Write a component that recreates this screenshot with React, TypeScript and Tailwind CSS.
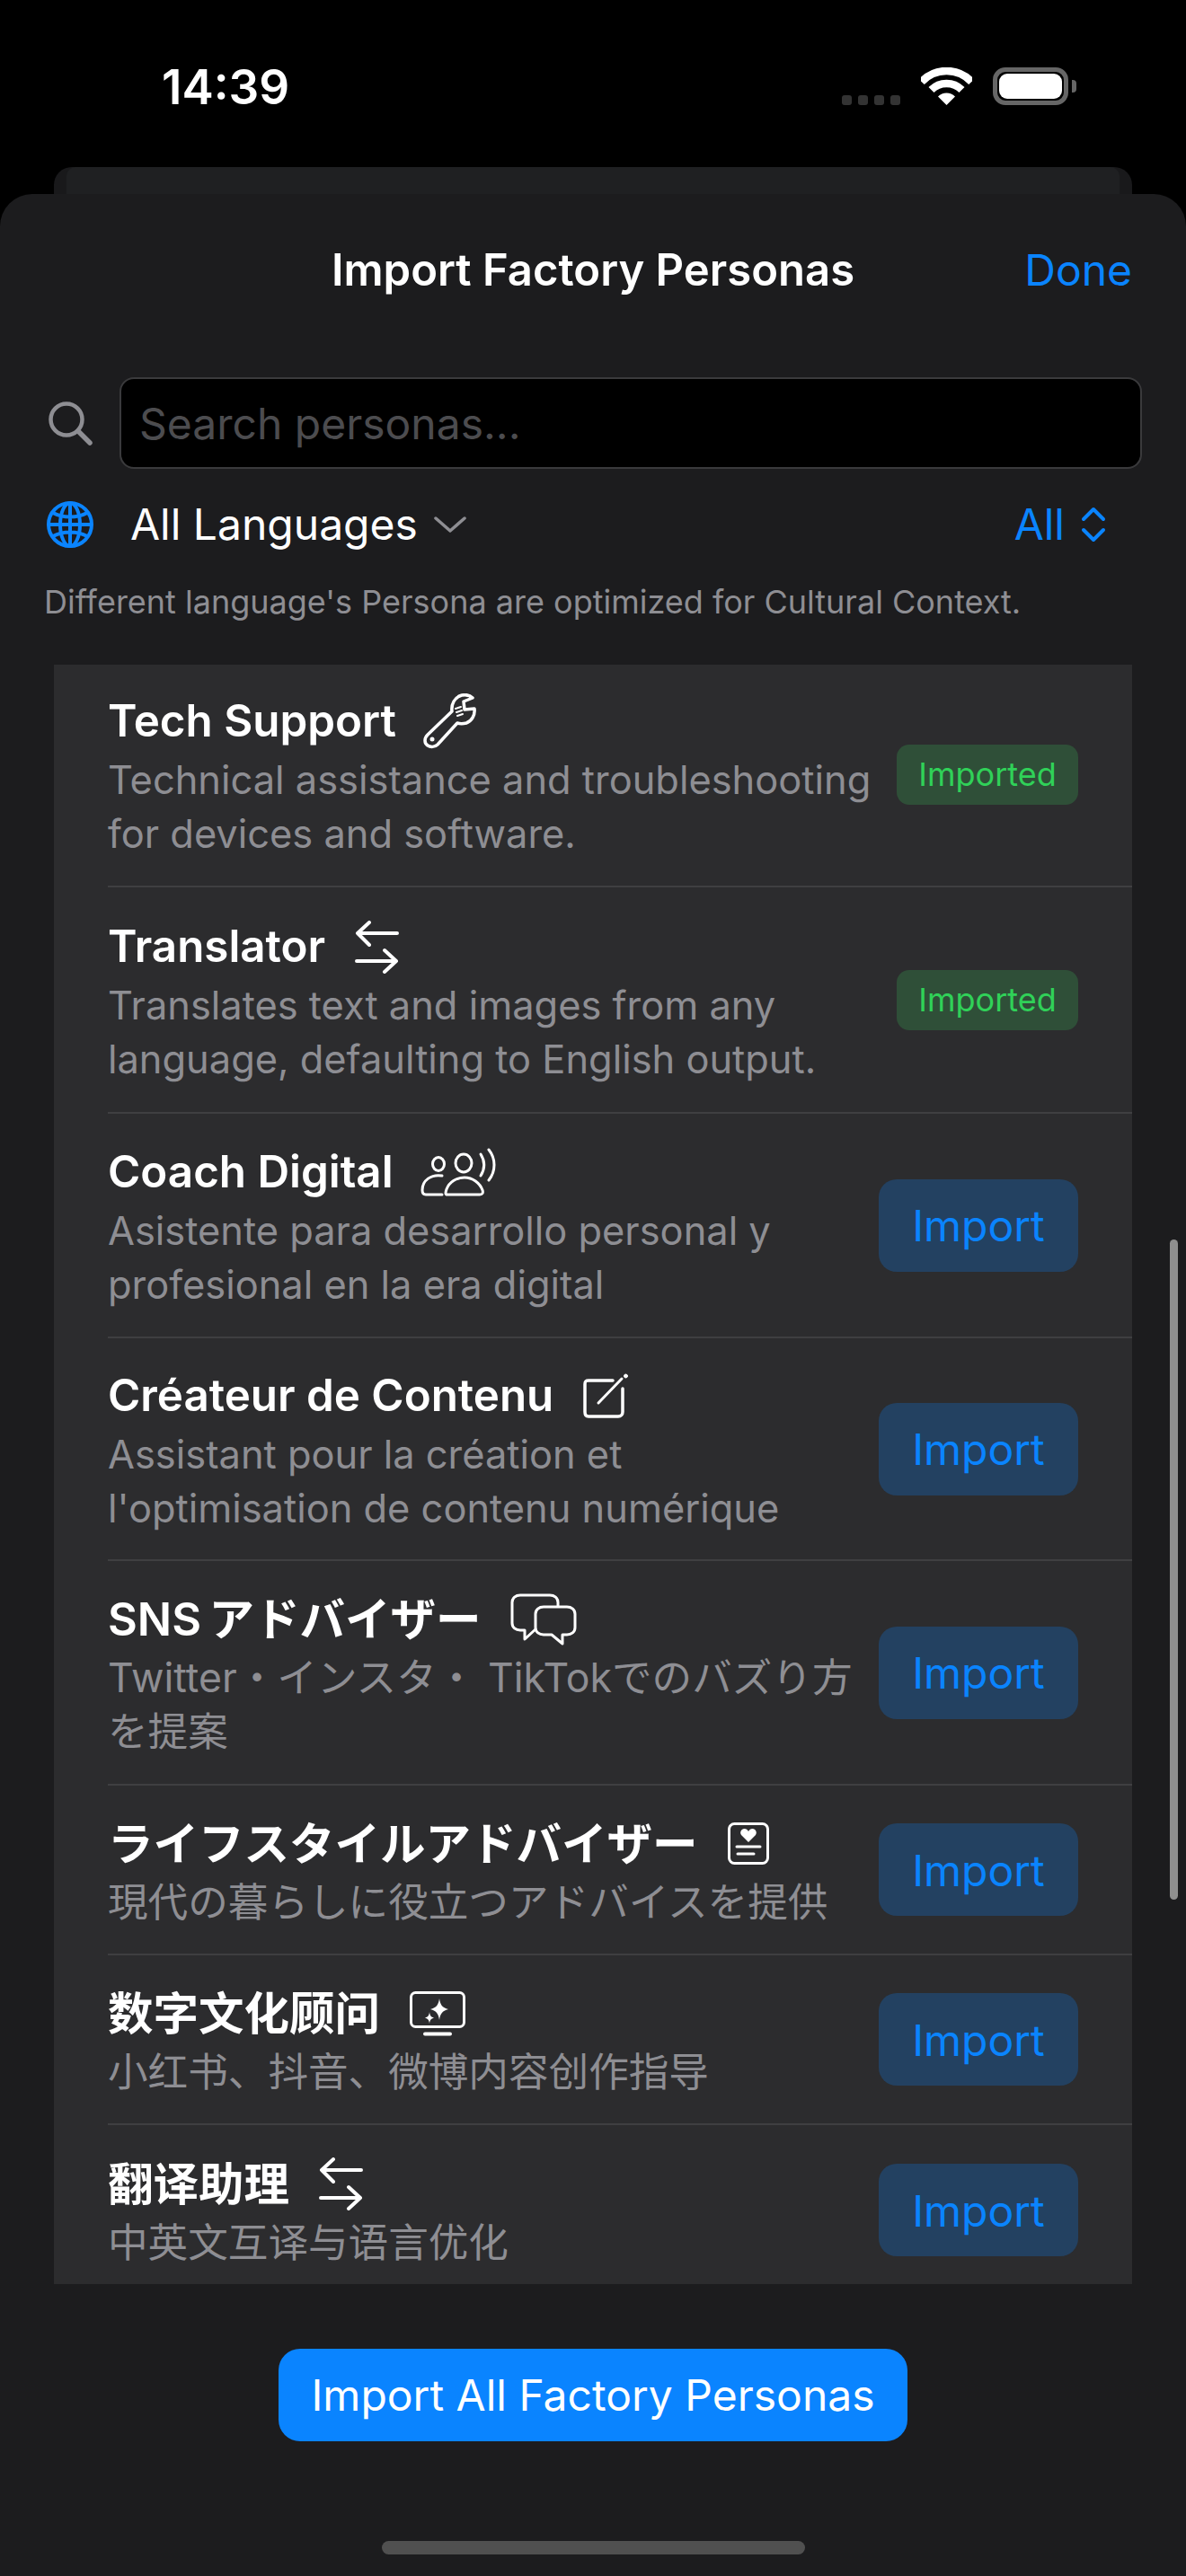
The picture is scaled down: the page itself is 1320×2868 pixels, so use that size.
import { JSX, ReactNode } from 'react';

const cjkJp = "font-['Inter','Noto_Sans_CJK_JP',sans-serif]";
const cjkSc = "font-['Inter','Noto_Sans_CJK_SC',sans-serif]";

function WrenchIcon(): JSX.Element {
  return (
    <svg viewBox="0 0 60 62" className="w-[60px] h-[62px] -ml-[3px]" fill="none" stroke="#fff" strokeWidth="3.5" strokeLinejoin="round" strokeLinecap="round">
      <path d="M5 46 L32 20 C31 12 35 4 43 2 C48 1 52 2 55 5 L45 9 L46 18 L57 17 C58 24 54 31 48 33 C44 34 41 34 38 33 L16 57 C13 60 8 60 5 58 C1 55 1 50 5 46 Z" />
      <circle cx="10" cy="51" r="2.5" fill="#fff" stroke="none" />
      <path d="M36 17 L42 15 M37 21 L43 19 M38 25 L44 23" strokeWidth="2" />
    </svg>
  );
}

function SwapIcon(): JSX.Element {
  return (
    <svg viewBox="0 0 49 59" className="w-[49px] h-[59px]" fill="none" stroke="#fff" strokeWidth="4" strokeLinecap="round" strokeLinejoin="round">
      <path d="M47 14 H3 M16 2 L3 14 L16 27" />
      <path d="M2 45 H46 M33 33 L46 45 L33 57" />
    </svg>
  );
}

function CoachIcon(): JSX.Element {
  return (
    <svg viewBox="0 0 85 54" className="w-[85px] h-[54px] -ml-[3px]" fill="none" stroke="#fff" strokeWidth="3" strokeLinecap="round" strokeLinejoin="round">
      <ellipse cx="20" cy="18" rx="6.5" ry="7.5" />
      <ellipse cx="48" cy="17" rx="9" ry="10" />
      <path d="M24 31 C12 29 2 36 2 47 C2 50 3 52 6 52 H24" />
      <path d="M30 52 C27 52 28 49 29 46 C32 38 40 33 49 33 C58 33 66 39 69 47 C70 50 69 52 66 52 Z" />
      <path d="M67 7 C72 15 72 23 67 31" />
      <path d="M76 2 C84 12 84 26 76 36" />
    </svg>
  );
}

function EditIcon(): JSX.Element {
  return (
    <svg viewBox="0 0 51 50" className="w-[51px] h-[50px]" fill="none" stroke="#fff" strokeLinecap="round" strokeLinejoin="round">
      <path d="M33 8 H6 C3 8 2 9 2 12 V43 C2 46 3 48 6 48 H39 C42 48 44 46 44 43 V17" strokeWidth="3.5" />
      <path d="M17 33 L43 6" strokeWidth="3" />
      <circle cx="47.5" cy="3" r="2" fill="#fff" />
    </svg>
  );
}

function ChatIcon(): JSX.Element {
  return (
    <svg viewBox="0 0 74 58" className="w-[74px] h-[58px]" fill="none" stroke="#fff" strokeWidth="3" strokeLinejoin="round">
      <path d="M53 14 V10 C53 5 49 2 44 2 H11 C6 2 2 5 2 10 V33 C2 38 6 41 11 41 H16 V51 L28 40" />
      <path d="M37 15 H63 C68 15 72 18 72 23 V38 C72 43 68 46 63 46 H58 V56 L46 46 H37 C32 46 28 43 28 38 V23 C28 18 32 15 37 15 Z" />
    </svg>
  );
}

function HeartCardIcon(): JSX.Element {
  return (
    <svg viewBox="0 0 46 47" className="w-[46px] h-[47px]" fill="none" stroke="#fff" strokeLinecap="round">
      <rect x="1.5" y="1.5" width="43" height="44" rx="6" strokeWidth="3" />
      <path d="M23 22 L15 14 C13 11 15 7 18.5 7 C20.5 7 22 8 23 10 C24 8 25.5 7 27.5 7 C31 7 33 11 31 14 Z" fill="#fff" stroke="none" />
      <path d="M10 27 H36" strokeWidth="3" />
      <path d="M11 35 H29" strokeWidth="3" />
    </svg>
  );
}

function SparkDisplayIcon(): JSX.Element {
  return (
    <svg viewBox="0 0 62 50" className="w-[62px] h-[50px]" fill="none" stroke="#fff" strokeLinecap="round">
      <rect x="1.5" y="1.5" width="59" height="38" rx="5" strokeWidth="3" />
      <path d="M17 47.5 H45" strokeWidth="4" />
      <path d="M33 8 C34 15 36 18 43 20 C36 22 34 25 33 32 C32 25 30 22 23 20 C30 18 32 15 33 8 Z" fill="#fff" stroke="none" />
      <path d="M22 23 C22.5 27 23.5 28.5 27 29.5 C23.5 30.5 22.5 32 22 36 C21.5 32 20.5 30.5 17 29.5 C20.5 28.5 21.5 27 22 23 Z" fill="#fff" stroke="none" />
    </svg>
  );
}

type Row = {
  height: string;
  title: string;
  desc: string;
  icon: ReactNode;
  imported?: boolean;
  font?: string;
  last?: boolean;
};

const rows: Row[] = [
  { height: 'h-[250px]', title: 'Tech Support', desc: 'Technical assistance and troubleshooting for devices and software.', icon: <WrenchIcon />, imported: true },
  { height: 'h-[252px]', title: 'Translator', desc: 'Translates text and images from any language, defaulting to English output.', icon: <SwapIcon />, imported: true },
  { height: 'h-[250px]', title: 'Coach Digital', desc: 'Asistente para desarrollo personal y profesional en la era digital', icon: <CoachIcon /> },
  { height: 'h-[248px]', title: 'Créateur de Contenu', desc: "Assistant pour la création et l'optimisation de contenu numérique", icon: <EditIcon /> },
  { height: 'h-[250px]', title: 'SNS\u2009アドバイザー', desc: 'Twitter・インスタ・ TikTokでのバズり方を提案', icon: <ChatIcon />, font: cjkJp },
  { height: 'h-[189px]', title: 'ライフスタイルアドバイザー', desc: '現代の暮らしに役立つアドバイスを提供', icon: <HeartCardIcon />, font: cjkJp },
  { height: 'h-[189px]', title: '数字文化顾问', desc: '小红书、抖音、微博内容创作指导', icon: <SparkDisplayIcon />, font: cjkSc },
  { height: 'h-[189px]', title: '翻译助理', desc: '中英文互译与语言优化', icon: <SwapIcon />, font: cjkSc, last: true },
];

function PersonaRow({ row }: { row: Row }): JSX.Element {
  return (
    <div className={`${row.height} ${row.last ? '' : 'border-b-2 border-[#3f3f41]'} ${row.font ?? ''} flex items-center justify-between gap-[20px] pr-[60px]`}>
      <div className="flex-1 min-w-0 pt-[4px]">
        <div className="h-[66px] flex items-center gap-[33px]">
          <span className={`${row.font ? 'text-[50.5px]' : 'text-[49.3px]'} font-semibold text-white whitespace-nowrap`}>{row.title}</span>
          {row.icon}
        </div>
        <p className={`mt-[2px] ${row.font ? 'text-[44.6px]' : 'text-[43.4px]'} leading-[60px] text-[#8e8e93]`}>{row.desc}</p>
      </div>
      {row.imported ? (
        <div className="w-[202px] h-[67px] shrink-0 rounded-[14px] bg-[#2f4f38] text-[#30d158] text-[36px] flex items-center justify-center">
          Imported
        </div>
      ) : (
        <button className="w-[222px] h-[103px] shrink-0 rounded-[20px] bg-[#234161] text-[#0a84ff] text-[48px] pt-[2px] flex items-center justify-center">
          Import
        </button>
      )}
    </div>
  );
}

export default function App(): JSX.Element {
  return (
    <div className="relative w-[1320px] h-[2868px] bg-black overflow-hidden font-['Inter',sans-serif] flex flex-col">
      {/* Status bar */}
      <div className="h-[186px] shrink-0 relative">
        <div className="absolute left-[180px] top-[65px] text-white text-[53px] font-semibold leading-[64px]">14:39</div>
        <div className="absolute left-[937px] top-[75px] flex items-end">
          <div className="flex gap-[7px]">
            <span className="w-[11px] h-[11px] rounded-[3px] bg-[#333333]" />
            <span className="w-[11px] h-[11px] rounded-[3px] bg-[#333333]" />
            <span className="w-[11px] h-[11px] rounded-[3px] bg-[#333333]" />
            <span className="w-[11px] h-[11px] rounded-[3px] bg-[#333333]" />
          </div>
          <svg viewBox="0 0 57 42" className="w-[57px] h-[42px] ml-[23px]" fill="none" stroke="#fff">
            <path d="M0.7 16.1 A38 38 0 0 1 56.3 16.1" strokeWidth="8.5" />
            <path d="M11.5 25 A24 24 0 0 1 45.5 25" strokeWidth="8.5" />
            <path d="M28.5 42 L19 32.5 A13.5 13.5 0 0 1 38 32.5 Z" fill="#fff" stroke="none" />
          </svg>
          <div className="ml-[23px] w-[84px] h-[42px] rounded-[14px] border-[5px] border-[#666666] p-[2px]">
            <div className="w-full h-full rounded-[9px] bg-white" />
          </div>
          <div className="ml-[4px] mb-[14px] w-[5px] h-[14px] rounded-r-[4px] bg-[#666666]" />
        </div>
        {/* Card behind the sheet */}
        <div className="absolute left-[60px] right-[60px] top-[186px] h-[40px] rounded-t-[20px] bg-[#19191b] px-[14px]">
          <div className="h-full rounded-t-[10px] bg-[#1f2022]" />
        </div>
      </div>

      {/* Sheet */}
      <div className="relative mt-[30px] flex-1 rounded-t-[36px] bg-[#1c1c1e] flex flex-col">
        <div className="h-[170px] shrink-0 grid grid-cols-[1fr_auto_1fr] items-center px-[60px]">
          <span />
          <h1 className="text-[49px] font-semibold text-white">Import Factory Personas</h1>
          <button className="justify-self-end text-[48px] text-[#0a84ff]">Done</button>
        </div>

        <div className="mt-[34px] flex items-center gap-[30px] pl-[54px] pr-[49px]">
          <svg viewBox="0 0 49 49" className="w-[49px] h-[49px] shrink-0" fill="none" stroke="#8e8e93" strokeWidth="4.5" strokeLinecap="round">
            <circle cx="20" cy="20" r="17.5" />
            <path d="M33 33 L46 46" strokeWidth="5.5" />
          </svg>
          <input
            readOnly
            placeholder="Search personas..."
            className="flex-1 min-w-0 h-[102px] rounded-[16px] bg-black border-2 border-[#3a3a3c] pl-[20px] text-[48px] text-white placeholder:text-[#4c4c4f] outline-none"
          />
        </div>

        <div className="mt-[32px] h-[60px] flex items-center justify-between pl-[52px] pr-[89px]">
          <div className="flex items-center">
            <svg viewBox="0 0 52 52" className="w-[52px] h-[52px]" fill="none" stroke="#0a84ff" strokeWidth="4">
              <circle cx="26" cy="26" r="24" />
              <ellipse cx="26" cy="26" rx="11" ry="24" />
              <path d="M26 2 V50 M2 26 H50 M7 13 C18 19 34 19 45 13 M7 39 C18 33 34 33 45 39" />
            </svg>
            <span className="ml-[41px] text-[48px] text-white">All Languages</span>
            <svg viewBox="0 0 36 18" className="ml-[18px] w-[36px] h-[18px]" fill="none" stroke="#8e8e93" strokeWidth="3.5" strokeLinecap="round" strokeLinejoin="round">
              <path d="M2 2 L18 16 L34 2" />
            </svg>
          </div>
          <div className="flex items-center gap-[18px]">
            <span className="text-[48px] text-[#0a84ff]">All</span>
            <svg viewBox="0 0 28 40" className="w-[28px] h-[40px]" fill="none" stroke="#0a84ff" strokeWidth="4" strokeLinecap="round" strokeLinejoin="round">
              <path d="M3 14 L14 3 L25 14 M3 26 L14 37 L25 26" />
            </svg>
          </div>
        </div>

        <p className="mt-[36px] pl-[49px] h-[40px] text-[36px] leading-[40px] text-[#8e8e93]">
          Different language's Persona are optimized for Cultural Context.
        </p>

        {/* Persona list, scrolled so the first row is cut by a few pixels */}
        <div className="mt-[50px] mx-[60px] h-[1803px] shrink-0 bg-[#2c2c2e] overflow-hidden">
          <div className="-mt-[2px] ml-[60px]">
            {rows.map((row) => (
              <PersonaRow key={row.title} row={row} />
            ))}
          </div>
        </div>

        <button className="mt-[72px] mx-auto w-[700px] h-[103px] shrink-0 rounded-[24px] bg-[#0a84ff] text-white text-[48px]">
          Import All Factory Personas
        </button>

        <div className="mt-[111px] mx-auto w-[471px] h-[15px] shrink-0 rounded-full bg-[#505050]" />

        {/* Scroll indicator */}
        <div className="absolute left-[1302px] top-[1164px] w-[9px] h-[735px] rounded-full bg-[#8f8f8f]" />
      </div>
    </div>
  );
}
